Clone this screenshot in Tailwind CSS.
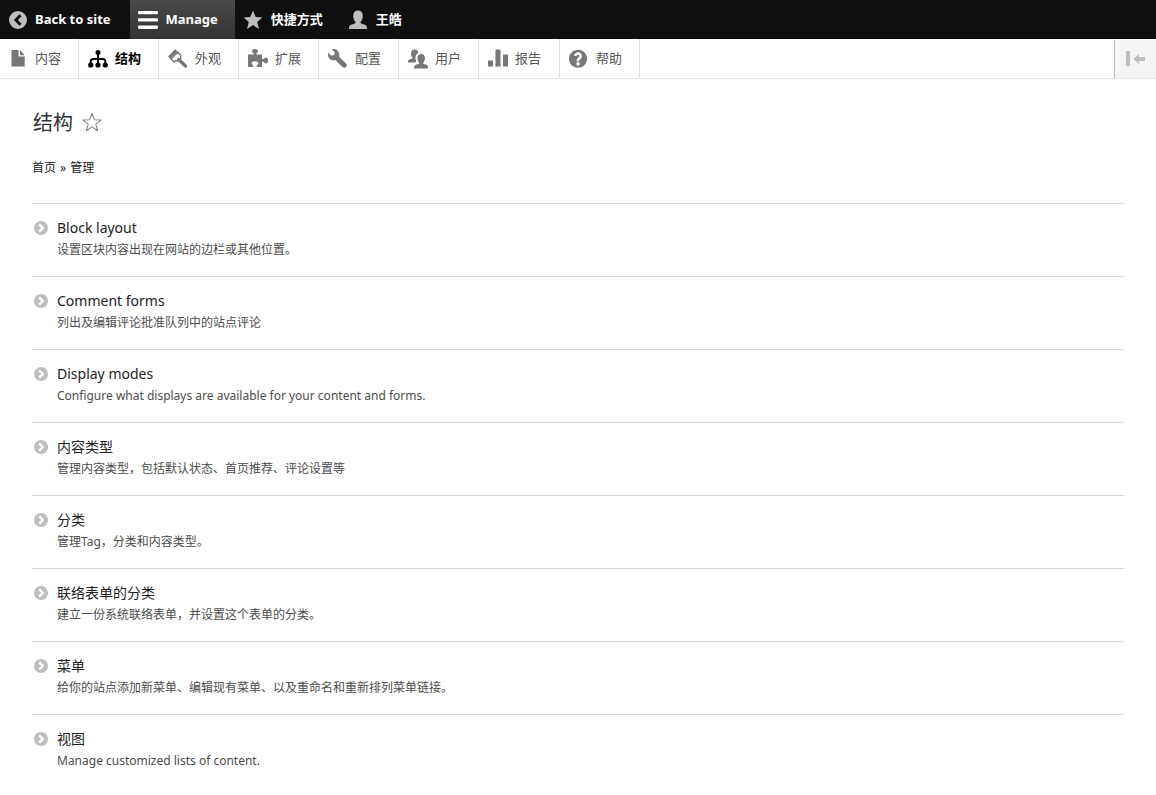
<!DOCTYPE html>
<html lang="zh-Hans">
<head>
<meta charset="utf-8">
<meta name="viewport" content="width=device-width, initial-scale=1">
<title>结构</title>
<script src="https://cdn.jsdelivr.net/npm/@tailwindcss/browser@4"></script>
</head>
<body class="bg-white font-['Noto_Sans','Noto_Sans_CJK_SC',sans-serif] text-[#333]">
<svg class="hidden" aria-hidden="true">
  <symbol id="chevron" viewBox="0 0 14 14">
    <circle cx="7" cy="7" r="7" fill="#bebebe"/>
    <path d="M5.2 3.4 8.800 7l-3.600 3.600" fill="none" stroke="#fff" stroke-width="2.400"/>
  </symbol>
</svg>

<nav aria-label="工具栏" class="flex h-[39px] bg-[#0f0f0f] text-[13px] leading-5 font-bold text-white">
  <a href="#" class="flex items-center gap-[7px] pl-2 pr-[19px]">
    <svg class="size-5 shrink-0" viewBox="0 0 20 20"><circle cx="10" cy="10" r="9" fill="#bebebe"/><path d="M12.600 5.200 7.800 10l4.800 4.800" fill="none" stroke="#0f0f0f" stroke-width="2.800"/></svg>
    <span class="pb-0.5">Back to site</span>
  </a>
  <a href="#" class="flex items-center gap-2 bg-linear-to-b from-[#4a4a4a] to-[#333] pl-2 pr-[17px]">
    <svg class="size-5 shrink-0" viewBox="0 0 20 20" fill="#fff"><rect y="1" width="20" height="3.300" rx="1.200"/><rect y="8.300" width="20" height="3.300" rx="1.200"/><rect y="15.600" width="20" height="3.300" rx="1.200"/></svg>
    <span class="pb-0.5">Manage</span>
  </a>
  <a href="#" class="flex items-center gap-2 pl-2 pr-[17px]">
    <svg class="size-5 shrink-0" viewBox="0 0 20 20" fill="#bebebe"><path d="m10 .6 2.700 6.500 6.700.4-5.200 4.500 1.800 7-6-3.900-6 3.900 1.800-7L.6 7.500l6.700-.4z"/></svg>
    <span class="pb-0.5">快捷方式</span>
  </a>
  <a href="#" class="flex items-center gap-2 pl-2 pr-[17px]">
    <svg class="size-5 shrink-0" viewBox="0 0 20 20" fill="#bebebe"><path d="M1 19c0-3.200.6-3.800 3-4.500 2.400-.7 3.600-1 3.600-2.200C5.900 10.500 5.200 8.500 5.200 5.800 5.200 2.600 7 .6 10 .6s4.800 2 4.800 5.200c0 2.700-.7 4.700-2.400 6.500 0 1.200 1.200 1.500 3.600 2.200 2.400.7 3 1.300 3 4.500z"/></svg>
    <span class="pb-0.5">王皓</span>
  </a>
</nav>

<nav aria-label="管理菜单" class="flex h-10 border-b border-[#e5e5e5] text-[13px] leading-5 text-[#565656]">
  <a href="#" class="flex items-center gap-[7px] border-r border-[#ddd] pl-2 pr-[17px]">
    <svg class="size-5 shrink-0" viewBox="0 0 20 20" fill="#777"><path d="M3.500 1h7v6.500h6.200V17.500H3.500z"/><path d="M12 1l4.700 5.200H12z"/></svg>
    <span class="pb-0.5">内容</span>
  </a>
  <a href="#" aria-current="page" class="flex items-center gap-[7px] border-r border-[#ddd] pl-[9px] pr-[17px] font-bold text-black">
    <svg class="size-5 shrink-0" viewBox="0 0 20 20"><circle cx="10" cy="3.500" r="2.500"/><g fill="none" stroke="#000" stroke-width="2"><path d="M10 4v12M2.700 16v-3.500q0-2.500 2.500-2.500h9.600q2.500 0 2.500 2.500V16"/></g><circle cx="2.700" cy="16" r="2.600"/><circle cx="10" cy="16" r="2.600"/><circle cx="17.300" cy="16" r="2.600"/></svg>
    <span class="pb-0.5">结构</span>
  </a>
  <a href="#" class="flex items-center gap-[7px] border-r border-[#ddd] pl-[9px] pr-[17px]">
    <svg class="size-5 shrink-0" viewBox="0 0 20 20"><path d="M0 7.500 7.200.2l2.400 2.300-7.300 7.300z" fill="#777"/><path d="M3 9.900 9.700 3.300l3 3v3.200l-2.200 2.300H7.700L6.200 13.100z" fill="none" stroke="#777" stroke-width="1.400"/><path d="m10.700 10.500 6.800 6.500" fill="none" stroke="#777" stroke-width="3.400" stroke-linecap="round"/></svg>
    <span class="pb-0.5">外观</span>
  </a>
  <a href="#" class="flex items-center gap-[7px] border-r border-[#ddd] pl-[9px] pr-[17px]">
    <svg class="size-5 shrink-0" viewBox="0 0 20 20" fill="#777"><path d="M0 5.500h5.600V4.200C4.500 3.500 4 2.800 4 2 4 .8 5.200.1 7 .1s3 .7 3 1.900c0 .8-.5 1.500-1.600 2.200v1.300H14V10h1.600c.7-1.100 1.300-1.600 2.200-1.600 1.300 0 2.200 1.200 2.200 3s-.9 3-2.200 3c-.9 0-1.500-.5-2.200-1.600H14V18H8.800v-1.700c1-.6 1.500-1.200 1.500-2 0-1.300-1.300-2.100-3.300-2.100s-3.300.8-3.300 2.100c0 .8.5 1.400 1.500 2V18H0z"/></svg>
    <span class="pb-0.5">扩展</span>
  </a>
  <a href="#" class="flex items-center gap-[7px] border-r border-[#ddd] pl-[9px] pr-[17px]">
    <svg class="size-5 shrink-0" viewBox="0 0 16 16" fill="#777"><path d="M14.416 11.586l-.01-.009-5.656-5.656c.15-.449.252-.921.252-1.421 0-2.485-2.016-4.500-4.502-4.500-.505 0-.981.102-1.434.255l2.431 2.431-.588 2.196-2.196.588L.268 3.025C.106 3.489 0 3.981 0 4.500 0 6.986 2.014 9 4.500 9c.5 0 .972-.102 1.421-.251l5.667 5.665c.781.781 2.047.781 2.828 0s.781-2.047 0-2.828z"/></svg>
    <span class="pb-0.5">配置</span>
  </a>
  <a href="#" class="flex items-center gap-[7px] border-r border-[#ddd] pl-[9px] pr-[17px]">
    <svg class="size-5 shrink-0" viewBox="0 0 20 20" fill="#777"><path d="M0 13.500c0-2.500.5-2.900 2.200-3.300 1.500-.4 2.400-.7 2.400-1.500C3.500 7.500 3 6 3 4.200 3 2 4.300.4 6.600.4s3.700 1.500 3.700 3.500C8.700 4.800 7.400 6.700 7.400 9.200c0 1.300.4 2.500 1 3.600l-2.200.7z"/><path d="M6 19.500c0-2.800.6-3.300 2.600-3.900 1.700-.5 2.700-.7 2.700-1.700-1.200-1.300-1.800-2.800-1.800-4.700 0-2.500 1.400-4.100 3.700-4.100s3.700 1.600 3.700 4.100c0 1.900-.6 3.400-1.800 4.700 0 1 .9 1.200 2.500 1.700 1.900.6 2.400 1.100 2.400 3.900z"/></svg>
    <span class="pb-0.5">用户</span>
  </a>
  <a href="#" class="flex items-center gap-[7px] border-r border-[#ddd] pl-[9px] pr-[18px]">
    <svg class="size-5 shrink-0" viewBox="0 0 20 20" fill="#777"><rect y="11.500" width="5" height="6" rx=".5"/><rect x="7.500" y=".5" width="5" height="17" rx=".5"/><rect x="15" y="5.500" width="5" height="12" rx=".5"/></svg>
    <span class="pb-0.5">报告</span>
  </a>
  <a href="#" class="flex items-center gap-[7px] border-r border-[#ddd] pl-[9px] pr-[17px]">
    <svg class="size-5 shrink-0" viewBox="1 0.500 15.500 15.500" fill="#777"><path d="M8.002 1c-3.868 0-7.002 3.134-7.002 7s3.134 7 7.002 7c3.865 0 7-3.134 7-7s-3.135-7-7-7zm3 5c0 .551-.16 1.085-.477 1.586l-.158.22c-.07.093-.189.241-.361.393-.168.148-.35.299-.545.447l-.203.189-.141.129-.096.17-.021.235v.63h-2.001v-.704c.026-.396.078-.73.204-.999.125-.269.271-.498.439-.688l.225-.21-.01-.015.176-.14.137-.128c.186-.139.357-.277.516-.417l.148-.18c.09-.152.156-.33.156-.518 0-.552-.448-1-1.001-1-.551 0-.999.448-.999 1h-1.999c0-1.658 1.341-3 2.998-3 1.658 0 3.002 1.342 3.002 3zm-1.750 6.619c0 .344-.281.625-.625.625h-1.250c-.345 0-.626-.281-.626-.625v-1.238c0-.344.281-.625.626-.625h1.250c.344 0 .625.281.625.625v1.238z"/></svg>
    <span class="pb-0.5">帮助</span>
  </a>
  <button type="button" aria-label="垂直方向" class="ml-auto mt-px flex w-[42px] items-center border-l border-[#bbb] bg-[#f4f4f4] pl-2.5">
    <svg class="size-5" viewBox="0 0 20 20" fill="#bebebe"><rect x="1" y="2" width="4" height="15" rx=".5"/><path d="M8.600 10l5.400-5v3h6.500v4H14v3z"/></svg>
  </button>
</nav>

<main class="px-8 pt-7">
  <div class="flex items-center gap-[9px]">
    <h1 class="pl-px text-[20px] leading-8">结构</h1>
    <button type="button" aria-label="添加到快捷方式" class="pb-0.5">
      <svg class="size-5" viewBox="0 0 20 20"><path d="m10 1.500 2.400 6.200 6.600.3-5.200 4.100 1.800 6.600-5.600-3.800-5.600 3.800 1.800-6.600L1 8l6.600-.3z" fill="none" stroke="#8b897f" stroke-width="1.100" stroke-linejoin="round"/></svg>
    </button>
  </div>
  <nav aria-label="面包屑" class="mt-[19px] flex gap-1 text-[12px] leading-5 text-[#222]">
    <a href="#">首页</a><span>»</span><a href="#">管理</a>
  </nav>
  <ul class="mt-[25px] text-[12px] leading-[22px] text-[#4c4c4c]">
    <li class="border-t border-[#d8d8d8] pt-[13px] pb-[15px] pl-0.5"><a href="#" class="flex gap-[9px]"><svg class="mt-1 size-3.5 shrink-0"><use href="#chevron"/></svg><span><span class="block text-[14px] text-[#222]">Block layout</span><span class="block">设置区块内容出现在网站的边栏或其他位置。</span></span></a></li>
    <li class="border-t border-[#d8d8d8] pt-[13px] pb-[15px] pl-0.5"><a href="#" class="flex gap-[9px]"><svg class="mt-1 size-3.5 shrink-0"><use href="#chevron"/></svg><span><span class="block text-[14px] text-[#222]">Comment forms</span><span class="block">列出及编辑评论批准队列中的站点评论</span></span></a></li>
    <li class="border-t border-[#d8d8d8] pt-[13px] pb-[15px] pl-0.5"><a href="#" class="flex gap-[9px]"><svg class="mt-1 size-3.5 shrink-0"><use href="#chevron"/></svg><span><span class="block text-[14px] text-[#222]">Display modes</span><span class="block">Configure what displays are available for your content and forms.</span></span></a></li>
    <li class="border-t border-[#d8d8d8] pt-[13px] pb-[15px] pl-0.5"><a href="#" class="flex gap-[9px]"><svg class="mt-1 size-3.5 shrink-0"><use href="#chevron"/></svg><span><span class="block text-[14px] text-[#222]">内容类型</span><span class="block">管理内容类型，包括默认状态、首页推荐、评论设置等</span></span></a></li>
    <li class="border-t border-[#d8d8d8] pt-[13px] pb-[15px] pl-0.5"><a href="#" class="flex gap-[9px]"><svg class="mt-1 size-3.5 shrink-0"><use href="#chevron"/></svg><span><span class="block text-[14px] text-[#222]">分类</span><span class="block">管理Tag，分类和内容类型。</span></span></a></li>
    <li class="border-t border-[#d8d8d8] pt-[13px] pb-[15px] pl-0.5"><a href="#" class="flex gap-[9px]"><svg class="mt-1 size-3.5 shrink-0"><use href="#chevron"/></svg><span><span class="block text-[14px] text-[#222]">联络表单的分类</span><span class="block">建立一份系统联络表单，并设置这个表单的分类。</span></span></a></li>
    <li class="border-t border-[#d8d8d8] pt-[13px] pb-[15px] pl-0.5"><a href="#" class="flex gap-[9px]"><svg class="mt-1 size-3.5 shrink-0"><use href="#chevron"/></svg><span><span class="block text-[14px] text-[#222]">菜单</span><span class="block">给你的站点添加新菜单、编辑现有菜单、以及重命名和重新排列菜单链接。</span></span></a></li>
    <li class="border-t border-[#d8d8d8] pt-[13px] pb-[15px] pl-0.5"><a href="#" class="flex gap-[9px]"><svg class="mt-1 size-3.5 shrink-0"><use href="#chevron"/></svg><span><span class="block text-[14px] text-[#222]">视图</span><span class="block">Manage customized lists of content.</span></span></a></li>
  </ul>
</main>
</body>
</html>
